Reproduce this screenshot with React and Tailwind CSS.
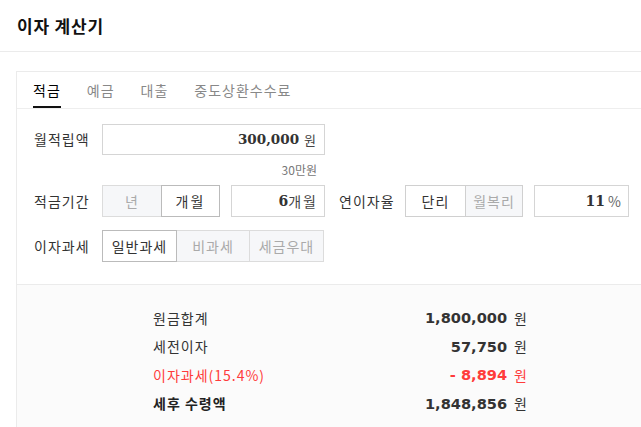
import React from "react";

const KR = { fontFamily: '"Noto Sans CJK KR", "Noto Sans", sans-serif' };
const SERIF = { fontFamily: '"DejaVu Serif", "Liberation Serif", serif' };
const SANS = { fontFamily: '"DejaVu Sans", Verdana, sans-serif' };

function Seg({ children, active, className = "" }) {
  return (
    <div
      className={
        "h-8 flex items-center justify-center border text-[14px] tracking-[1px] " +
        (active
          ? "bg-white border-[#bbbbbb] text-[#333] z-10 relative"
          : "bg-[#f6f7f9] border-[#dcdcdc] text-[#aaaaaa]") +
        " " +
        className
      }
    >
      {children}
    </div>
  );
}

function ResultRow({ label, value, labelClass, valueClass, unitClass }) {
  return (
    <div className="h-[28.5px] flex items-center justify-between">
      <span className={"text-[14px] tracking-[1px] " + labelClass}>{label}</span>
      <span className="flex items-center">
        <span style={SANS} className={"text-[14.6px] font-bold " + valueClass}>
          {value}
        </span>
        <span className={"ml-[7px] text-[14px] " + unitClass}>원</span>
      </span>
    </div>
  );
}

export default function App() {
  return (
    <div style={KR} className="w-full bg-white text-[#333] overflow-hidden">
      <div className="h-[52px] border-b border-[#ebebeb] pl-[17px] flex items-center">
        <span className="text-[17px] font-bold text-[#111] tracking-[0.8px]">이자 계산기</span>
      </div>

      <div className="mt-[19px] ml-4 border-l border-t border-[#ebebeb]">
        <div className="flex h-[37px] border-b border-[#eeeeee] pl-4 gap-[26px] text-[14px] tracking-[1px]">
          <div className="relative flex items-center text-[#000]">
            적금
            <div className="absolute left-0 right-0 bottom-0 h-[2px] bg-[#111]" />
          </div>
          <div className="flex items-center text-[#888]">예금</div>
          <div className="flex items-center text-[#888]">대출</div>
          <div className="flex items-center text-[#888]">중도상환수수료</div>
        </div>

        <div className="pl-[17px] pt-[15px] pb-[22px] border-b border-[#ebebeb]">
          <div className="flex items-center">
            <div className="w-[68px] text-[14px] tracking-[1px] text-[#333]">월적립액</div>
            <div className="w-[223px] h-[31px] border border-[#d5d5d5] flex items-center justify-end pr-2">
              <span style={SERIF} className="text-[13.5px] font-bold text-[#333]">
                300,000
              </span>
              <span className="ml-[5px] text-[13px] text-[#444]">원</span>
            </div>
          </div>
          <div className="flex">
            <div className="ml-[68px] w-[223px] h-[30px] flex items-center justify-end pr-2 text-[12px] text-[#777]">
              30만원
            </div>
          </div>

          <div className="flex items-center">
            <div className="w-[68px] text-[14px] tracking-[1px] text-[#333]">적금기간</div>
            <Seg className="w-[60px]">년</Seg>
            <Seg active className="w-[59px] -ml-px tracking-[2px]">
              개월
            </Seg>
            <div className="ml-[11px] w-[94px] h-8 border border-[#d5d5d5] flex items-center justify-end pr-2">
              <span style={SERIF} className="text-[14px] font-bold text-[#333]">
                6
              </span>
              <span className="text-[14px] text-[#444] tracking-[2px] -mr-[2px]">개월</span>
            </div>
            <div className="ml-[14px] w-[66px] text-[14px] tracking-[1px] text-[#333]">연이자율</div>
            <Seg active className="w-[61px] !border-[#d0d0d0]">
              단리
            </Seg>
            <Seg className="w-[58px] -ml-px !border-[#d0d0d0]">월복리</Seg>
            <div className="ml-[11px] w-[95px] h-8 border border-[#d5d5d5] flex items-center justify-end pr-[7px]">
              <span style={SERIF} className="text-[14px] font-bold text-[#333]">
                11
              </span>
              <span className="ml-[3px] text-[14px] text-[#666]">%</span>
            </div>
          </div>

          <div className="flex items-center mt-[13px]">
            <div className="w-[68px] text-[14px] tracking-[1px] text-[#333]">이자과세</div>
            <Seg active className="w-[75px]">
              일반과세
            </Seg>
            <Seg className="w-[74px] -ml-px">비과세</Seg>
            <Seg className="w-[75px] -ml-px">세금우대</Seg>
          </div>
        </div>

        <div className="bg-[#fbfbfb] pt-[19px] pb-6">
          <div className="ml-[136px] w-[374px]">
            <ResultRow
              label="원금합계"
              value="1,800,000"
              labelClass="text-[#333]"
              valueClass="text-[#333]"
              unitClass="text-[#333]"
            />
            <ResultRow
              label="세전이자"
              value="57,750"
              labelClass="text-[#333]"
              valueClass="text-[#333]"
              unitClass="text-[#333]"
            />
            <ResultRow
              label="이자과세(15.4%)"
              value="- 8,894"
              labelClass="text-[#ff3b3b]"
              valueClass="text-[#ff3b3b]"
              unitClass="text-[#ff3b3b]"
            />
            <ResultRow
              label="세후 수령액"
              value="1,848,856"
              labelClass="text-[#222] font-bold"
              valueClass="text-[#333]"
              unitClass="text-[#333]"
            />
          </div>
        </div>
      </div>
    </div>
  );
}
